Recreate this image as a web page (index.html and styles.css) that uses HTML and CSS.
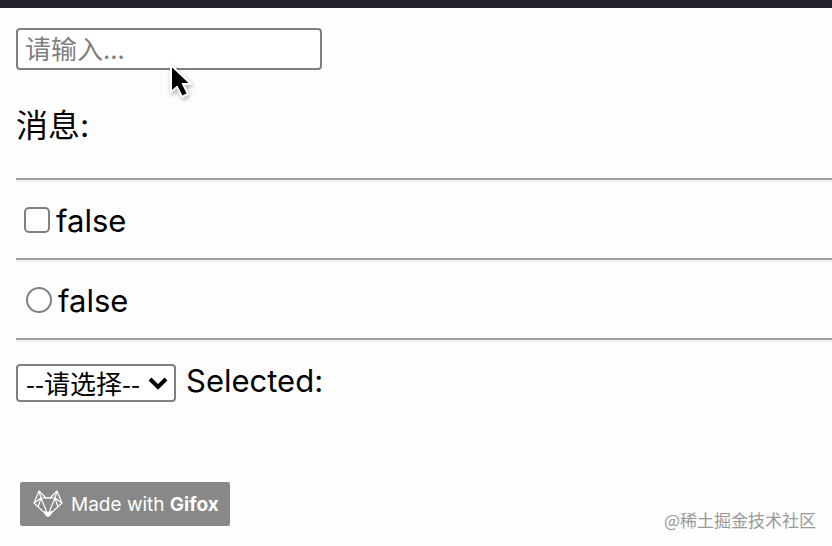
FILE: index.html
```html
<!DOCTYPE html>
<html lang="zh-CN">
  <head>
    <meta charset="UTF-8" />
    <meta name="viewport" content="width=device-width, initial-scale=1.0" />
    <title>v-model</title>
    <link rel="stylesheet" href="styles.css">
  </head>
  <body>
    <div class="topbar"></div>

    <main>
      <div class="inputRow">
        <input type="text" id="message" class="textInput" placeholder="请输入..." aria-label="消息">
        <svg class="cursor" viewBox="0 0 24 38" aria-hidden="true">
          <path d="M3 3 V30 L9 25 L14 35 L20 32 L15 22 H23 Z" fill="#000" stroke="#fff" stroke-width="2" />
        </svg>
      </div>
      <p class="message">消息: <span id="messageText"></span></p>
      <hr>
      <div class="row">
        <input type="checkbox" id="checkbox">
        <label for="checkbox">false</label>
      </div>
      <hr>
      <div class="row radioRow">
        <input type="radio" id="radio">
        <label for="radio">false</label>
      </div>
      <hr>
      <div class="row selectRow">
        <div class="selectBox">
          <select id="select" aria-label="请选择">
            <option>--请选择--</option>
          </select>
          <svg class="arrow" viewBox="0 0 20 14" aria-hidden="true">
            <path d="M2 3 L10 11 L18 3" fill="none" stroke="#000" stroke-width="4" />
          </svg>
        </div>
        <span class="selected">Selected:</span>
      </div>
    </main>

    <footer>
      <div class="badge">
        <svg class="fox" viewBox="0 0 30 28" aria-hidden="true">
          <g fill="none" stroke="#fff" stroke-width="1.2" stroke-linejoin="round">
            <path d="M6 1 L1 13 L15 26 L29 13 L24 1 L17 8 H13 Z" />
            <path d="M6 1 L8 8 L1 13 M24 1 L22 8 L29 13 M8 8 H22 M8 8 L15 25 L22 8 M8 8 L5 17 M22 8 L25 17" />
          </g>
          <path d="M11 21 L15 22 L19 21 L18 25 L15 27 L12 25 Z" fill="#fff" />
        </svg>
        <span>Made with <b>Gifox</b></span>
      </div>
      <div class="watermark">@稀土掘金技术社区</div>
    </footer>
  </body>
</html>
```
FILE: styles.css
```css
* {
  box-sizing: border-box;
}
body {
  margin: 0;
  background-color: #fdfdfd;
  color: #000;
  font-family: Inter, "Noto Sans CJK SC", sans-serif;
  font-size: 31px;
}
.topbar {
  height: 8px;
  background-color: #232129;
}
main {
  padding: 20px 0 0 16px;
}
.inputRow {
  position: relative;
  display: flex;
}
.textInput {
  width: 306px;
  height: 42px;
  padding: 0 7px 4px;
  border: 2px solid #808080;
  border-radius: 4px;
  background-color: #fff;
  font-family: "Noto Sans CJK SC", sans-serif;
  font-size: 26px;
}
.textInput::placeholder {
  color: #808080;
}
.cursor {
  position: absolute;
  left: 152px;
  top: 34px;
  width: 24px;
  height: 38px;
  filter: drop-shadow(1px 2px 2px rgba(0, 0, 0, 0.3));
}
.message {
  margin: 34px 0 30px;
  font-size: 32px;
  line-height: 44px;
}
hr {
  height: 4px;
  margin: 0;
  border: 0;
  border-top: 2px solid #9f9f9f;
  background-color: #f0f0f0;
}
.row {
  display: flex;
  align-items: center;
  height: 76px;
  padding-left: 8px;
}
.radioRow {
  padding-left: 10px;
}
.row input {
  appearance: none;
  width: 26px;
  height: 26px;
  margin: 0 6px 0 0;
  border: 2px solid #808080;
  border-radius: 5px;
  background-color: #fff;
}
.row input[type="radio"] {
  border-radius: 50%;
}
.selectRow {
  align-items: flex-start;
  gap: 10px;
  padding: 22px 0 0;
}
.selectBox {
  position: relative;
  display: flex;
}
select {
  appearance: none;
  width: 160px;
  height: 38px;
  padding: 0 8px;
  border: 2px solid #808080;
  border-radius: 4px;
  background-color: #fff;
  color: #000;
  font-family: "Noto Sans CJK SC", sans-serif;
  font-size: 26px;
  line-height: 32px;
}
.arrow {
  position: absolute;
  right: 8px;
  top: 12px;
  width: 20px;
  height: 14px;
  pointer-events: none;
}
.selected {
  line-height: 34px;
}
footer {
  display: flex;
  justify-content: space-between;
  align-items: flex-end;
  padding: 64px 16px 12px 20px;
}
.badge {
  display: flex;
  align-items: center;
  gap: 8px;
  width: 210px;
  height: 44px;
  padding-left: 13px;
  border-radius: 2px;
  background-color: #888;
  color: #fff;
  font-size: 19px;
  white-space: nowrap;
}
.fox {
  width: 30px;
  height: 28px;
}
.watermark {
  color: #999;
  font-family: "Noto Sans CJK SC", sans-serif;
  font-size: 17px;
  line-height: 12px;
}
```
